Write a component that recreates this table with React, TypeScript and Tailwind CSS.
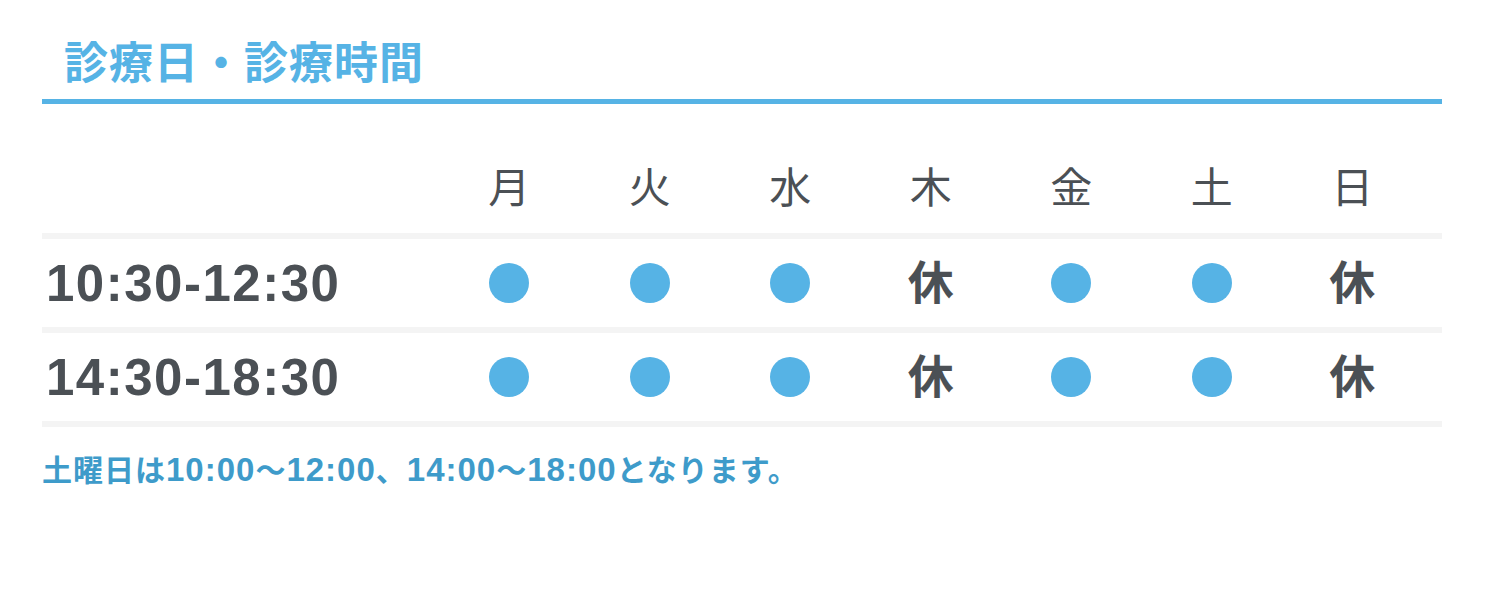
const days = ["月", "火", "水", "木", "金", "土", "日"];

const slots = [
  { time: "10:30-12:30", open: [true, true, true, false, true, true, false] },
  { time: "14:30-18:30", open: [true, true, true, false, true, true, false] },
];

const font = { fontFamily: '"Liberation Sans", "Noto Sans CJK JP", sans-serif' };

function Dot() {
  return <span className="block w-[40px] h-[40px] rounded-full bg-[#56b3e5]" />;
}

function Num({ children }: { children: string }) {
  return <span className="text-[33px] tracking-[1px]">{children}</span>;
}

export default function App() {
  return (
    <div className="w-[1508px] h-[590px] bg-white" style={font}>
      <div className="w-[1400px] ml-[42px]">
        <h2 className="pt-[42px] pl-[22px] pb-[13px] text-[44px] leading-none font-bold tracking-[1px] text-[#56b3e5] border-b-[5px] border-[#56b3e5]">
          診療日・診療時間
        </h2>

        <div className="mt-[41px]">
          <div className="grid grid-cols-[397px_repeat(7,140.5px)] h-[94px] border-b-[6px] border-[#f4f4f4] items-center">
            <div />
            {days.map((d) => (
              <div key={d} className="flex justify-center text-[42px] leading-none text-[#4b5055]">
                {d}
              </div>
            ))}
          </div>

          {slots.map((s) => (
            <div
              key={s.time}
              className="grid grid-cols-[397px_repeat(7,140.5px)] h-[94px] border-b-[6px] border-[#f4f4f4] items-center"
            >
              <div className="pl-[4px] text-[51px] leading-none font-bold tracking-[1.5px] text-[#4b5055]">{s.time}</div>
              {s.open.map((o, i) => (
                <div key={i} className="flex justify-center">
                  {o ? <Dot /> : <span className="text-[46px] leading-none font-bold text-[#4b5055]">休</span>}
                </div>
              ))}
            </div>
          ))}
        </div>

        <p className="mt-[26px] text-[30px] leading-none font-bold tracking-[1px] text-[#3e9bca]">
          土曜日は<Num>10:00</Num>～<Num>12:00</Num>、<Num>14:00</Num>～<Num>18:00</Num>となります。
        </p>
      </div>
    </div>
  );
}
